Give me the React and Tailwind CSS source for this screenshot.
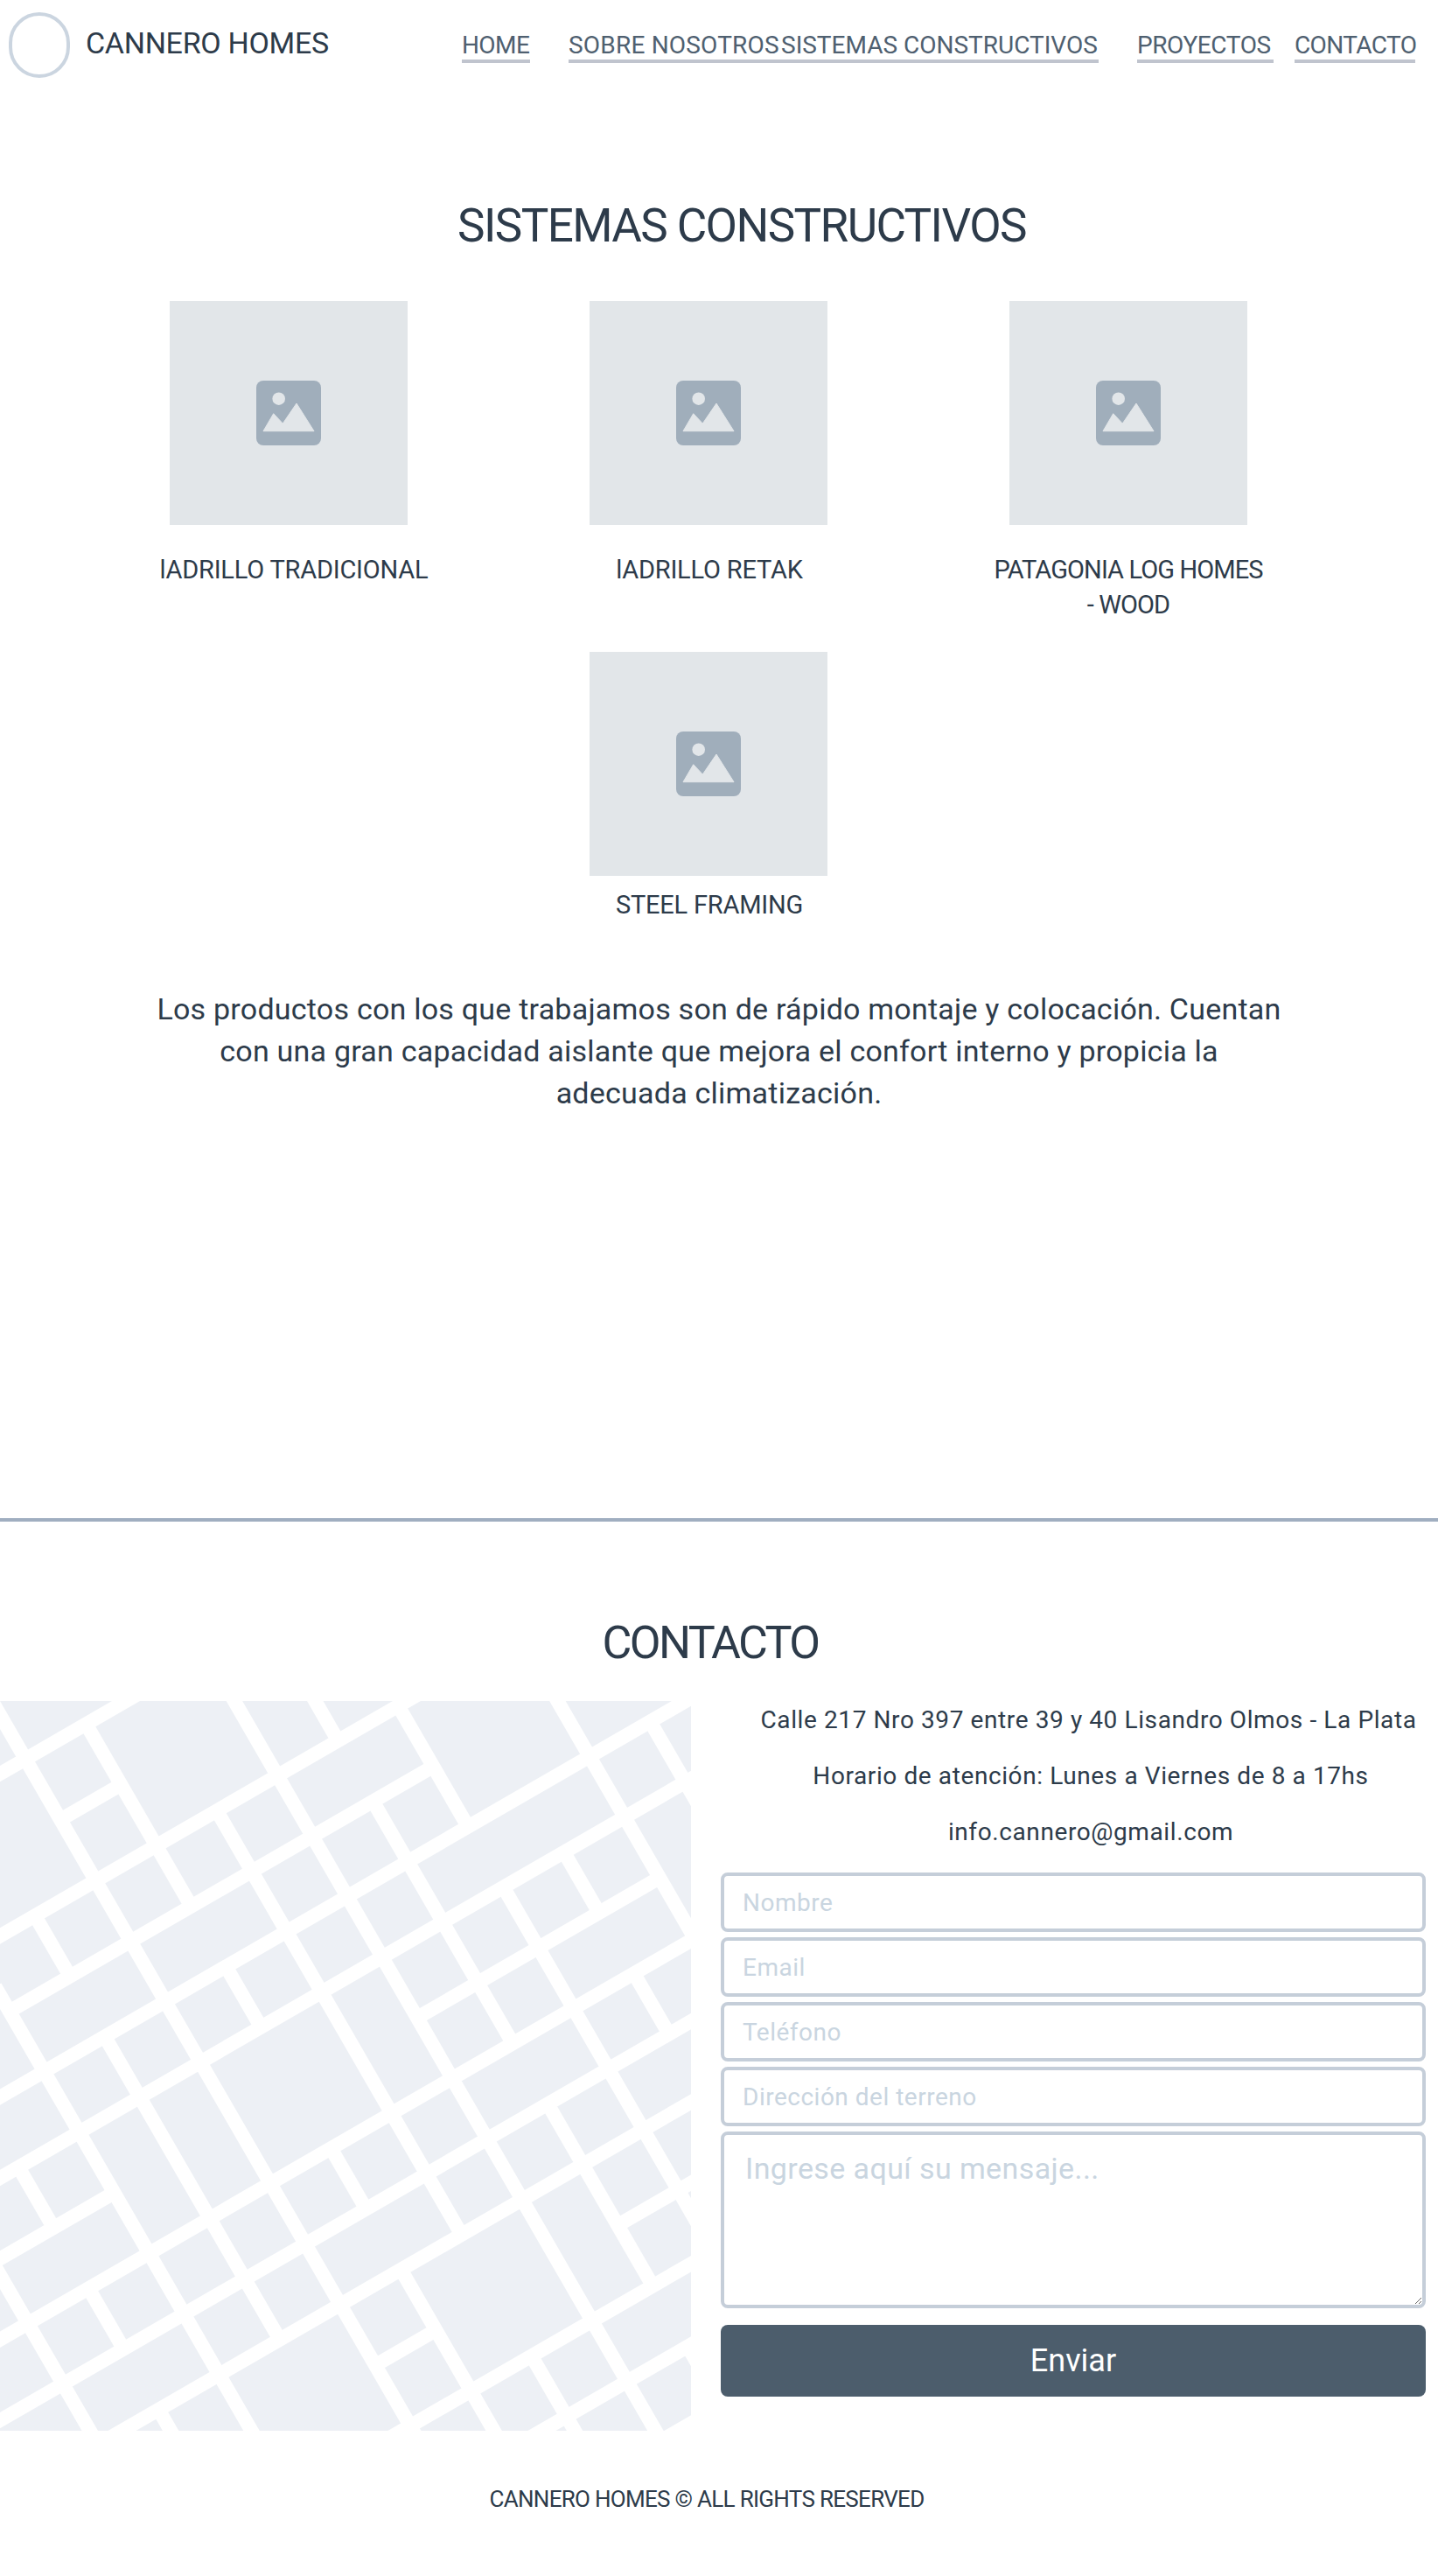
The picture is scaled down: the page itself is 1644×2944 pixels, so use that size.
import React from 'react';

// rotated street grid: u runs up-right, v runs down-right
const pt = (u, v) => [0.866 * u + 0.5 * v, -0.5 * u + 0.866 * v];

// roads of constant v: [v, uFrom, uTo]
const roadsA = [
  [72, -200, 500], [232.5, -300, 600], [312.5, -168, 391.5], [392, -500, 800],
  [152, -8, 72], [472, -500, 800], [552, -400, -168], [552, 232, 552],
  [632, -500, 800], [712, -500, 800], [792, -328, 800], [872, -8, 72],
  [872, 312, 800], [952, -100, 800], [1032, 72, 800], [1110, 232, 800],
];

// roads of constant u: [u, vFrom, vTo]
const roadsB = [
  [-8, -100, 1200], [72, 72, 312], [72, 392, 472], [72, 792, 1200],
  [72, 632, 712], [152, 232, 792], [152, 952, 1200], [312, -100, 232],
  [232, -100, 1200], [552, -100, 1200], [632, 392, 1200], [-88, 232, 312],
  [-88, 392, 792], [-168, 280, 1200], [391.5, 232, 392], [392, 472, 1200],
  [312, 312, 632], [312, 712, 952], [312, 1032, 1200], [472, 472, 552],
  [472, 632, 712], [-248, 472, 552], [-248, 632, 712],
  [-248, 792, 1200], [-328, 552, 1200],
];

function StreetMap() {
  return (
    <svg viewBox="0 0 790 834" className="block w-[790px] h-[834px] bg-[#edf0f5]">
      <g stroke="#ffffff" strokeWidth="16" fill="none">
        {roadsA.map(([v, a, b], i) => {
          const [x1, y1] = pt(a, v);
          const [x2, y2] = pt(b, v);
          return <line key={`a${i}`} x1={x1} y1={y1} x2={x2} y2={y2} />;
        })}
        {roadsB.map(([u, a, b], i) => {
          const [x1, y1] = pt(u, a);
          const [x2, y2] = pt(u, b);
          return <line key={`b${i}`} x1={x1} y1={y1} x2={x2} y2={y2} />;
        })}
      </g>
    </svg>
  );
}

function Placeholder() {
  return (
    <div className="w-[272px] h-[256px] bg-[#e2e6e9] flex items-center justify-center">
      <svg viewBox="0 0 74 74" className="w-[74px] h-[74px]">
        <rect width="74" height="74" rx="8" fill="#a0aebb" />
        <circle cx="25.7" cy="20.7" r="7.3" fill="#e2e6e9" />
        <path d="M8 57.7 L19.7 37.7 L30.3 49 L46 26 L66 57.7 Z" fill="#e2e6e9" stroke="#e2e6e9" strokeWidth="1" strokeLinejoin="round" />
      </svg>
    </div>
  );
}

const navItems = [
  { name: 'HOME', cls: 'w-[78px] tracking-[-0.6px]' },
  { name: 'SOBRE NOSOTROS', cls: 'w-[243px] ml-[44px] tracking-[0.2px]' },
  { name: 'SISTEMAS CONSTRUCTIVOS', cls: 'w-[363px] tracking-[0px]' },
  { name: 'PROYECTOS', cls: 'w-[156px] ml-[44px] tracking-[-0.4px]' },
  { name: 'CONTACTO', cls: 'w-[138px] ml-[24px] tracking-[-0.6px]' },
];

const inputClass = 'block w-full h-[68px] mb-[6px] px-[21px] border-4 border-[#c5ced9] rounded-lg text-[28px] tracking-[0.5px] bg-white placeholder:text-[#c9d5e0] outline-none';

export default function App() {
  return (
    <div className="h-[2944px] bg-white text-[#2d3b4a] font-['Roboto',sans-serif] overflow-hidden">
      {/* HEADER */}
      <header className="flex items-start h-[100px]">
        <div className="w-[70px] h-[75px] ml-[10px] mt-[14px] rounded-full border-4 border-[#cbd5e0]" />
        <span className="ml-[18px] mt-[29px] text-[34px] leading-[40px] tracking-[-0.3px]">CANNERO HOMES</span>
        <nav className="flex ml-auto mr-[26px] mt-[32px]">
          {navItems.map((item) => (
            <a key={item.name} className={`block h-[40px] pt-[4px] border-b-4 border-[#c0c4ce] text-[#4f6070] text-[28px] leading-[32px] whitespace-nowrap ${item.cls}`}>
              {item.name}
            </a>
          ))}
        </nav>
      </header>

      {/* SISTEMAS */}
      <h1 className="mt-[128px] pl-[52px] text-center text-[53px] leading-[60px] font-normal tracking-[-1.6px]">SISTEMAS CONSTRUCTIVOS</h1>

      <div className="grid grid-cols-3 w-[1440px] ml-[90px] mt-[56px] text-[29px] leading-[40px] tracking-[-0.2px]">
        <div className="flex flex-col items-center h-[401px]">
          <Placeholder />
          <p className="mt-[31px] pl-[12px] whitespace-nowrap">lADRILLO TRADICIONAL</p>
        </div>
        <div className="flex flex-col items-center">
          <Placeholder />
          <p className="mt-[31px] pl-[2px] whitespace-nowrap">lADRILLO RETAK</p>
        </div>
        <div className="flex flex-col items-center">
          <Placeholder />
          <p className="mt-[31px] w-[316px] text-center tracking-[-0.9px]">PATAGONIA LOG HOMES - WOOD</p>
        </div>
        <div className="flex flex-col items-center col-start-2">
          <Placeholder />
          <p className="mt-[13px] pl-[2px] whitespace-nowrap">STEEL FRAMING</p>
        </div>
      </div>

      <p className="mt-[75px] text-center text-[34px] leading-[48px] tracking-[0.23px]">
        Los productos con los que trabajamos son de rápido montaje y colocación. Cuentan
        <br />
        con una gran capacidad aislante que mejora el confort interno y propicia la
        <br />
        adecuada climatización.
      </p>

      <div className="mt-[462px] border-t-4 border-[#a0aec0]" />

      {/* CONTACTO */}
      <h2 className="mt-[109px] pr-[20px] text-center text-[52px] leading-[60px] font-normal tracking-[-2.6px]">CONTACTO</h2>

      <div className="flex mt-[36px]">
        <StreetMap />
        <div className="ml-[34px] w-[806px]">
          <div className="ml-[26px] w-[794px] pt-[1px] text-center text-[28px] leading-[42px] tracking-[0.6px]">
            <p className="mb-[22px] pr-[5px]">Calle 217 Nro 397 entre 39 y 40 Lisandro Olmos - La Plata</p>
            <p className="mb-[22px]">Horario de atención: Lunes a Viernes de 8 a 17hs</p>
            <p className="mb-[25px]">info.cannero@gmail.com</p>
          </div>
          <input className={inputClass} placeholder="Nombre" />
          <input className={inputClass} placeholder="Email" />
          <input className={inputClass} placeholder="Teléfono" />
          <input className={inputClass} placeholder="Dirección del terreno" />
          <textarea className="block w-full h-[202px] px-[24px] py-[17px] border-4 border-[#c5ced9] rounded-lg text-[34px] leading-[42px] tracking-[0.4px] placeholder:text-[#c9d5e0] outline-none" placeholder="Ingrese aquí su mensaje..." />
          <button className="block w-full h-[82px] mt-[19px] rounded-lg bg-[#4c5d6c] text-white text-[36px]">Enviar</button>
        </div>
      </div>

      <p className="mt-[60px] pr-[28px] text-center text-[26px] leading-[36px] tracking-[-0.7px]">CANNERO HOMES © ALL RIGHTS RESERVED</p>
    </div>
  );
}
